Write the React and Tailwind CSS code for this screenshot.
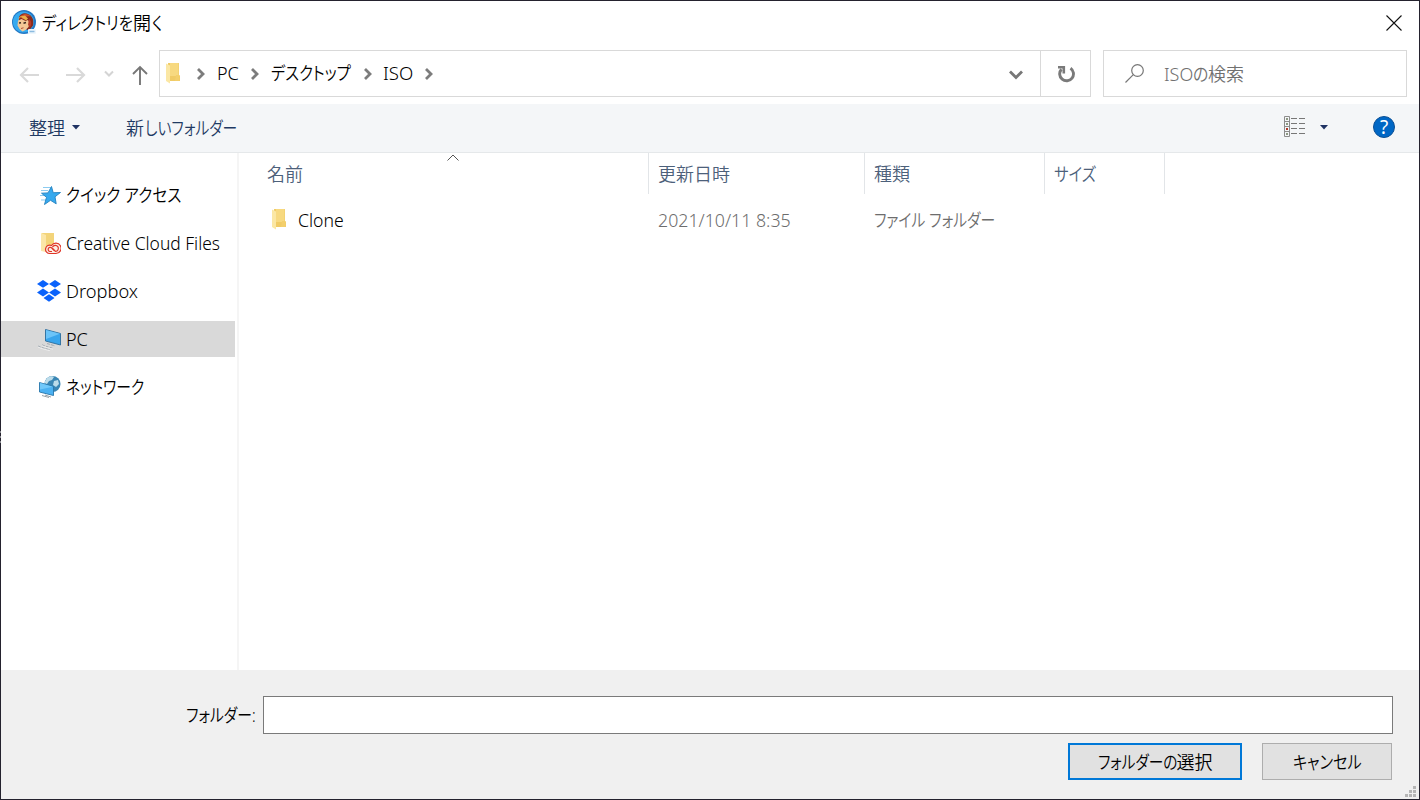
import { useLayoutEffect, useRef, useState } from 'react';

/**
 * One run of text, squeezed horizontally so that it takes exactly `w` pixels
 */
function Fit({ w, children, className = '' }) {
  const ref = useRef(null);
  const [scale, setScale] = useState(1);

  useLayoutEffect(() => {
    setScale(w / ref.current.offsetWidth);
  }, [w, children]);

  return (
    <span className={`inline-block shrink-0 whitespace-pre ${className}`} style={{ width: w }}>
      <span
        ref={ref}
        className="inline-block origin-left [font-feature-settings:'palt']"
        style={{ transform: `scaleX(${scale})` }}
      >
        {children}
      </span>
    </span>
  );
}

function AppLogo() {
  return (
    <svg className="w-6 h-6 shrink-0 -mt-[2px]" viewBox="0 0 24 24">
      <circle cx="12" cy="12" r="12" fill="#2478c4" />
      <circle cx="11.500" cy="12" r="10.600" fill="#36aaf0" />
      <path d="M7 7C9 3 13 2.500 17 4.500c4 2 5 6.500 4 11l-3 4-3 .5-4-6-4-3z" fill="#8a2a1c" />
      <path d="M8 6.500c3-3.500 8-3.500 11 0-4-1-6 0-8 3z" fill="#c9502c" />
      <path d="M6 10.500l3.500-1.500 4 2 2.500-1 1.500 3-1 4-3 3-3 1.500-3-2.500-2-3.500z" fill="#f4c795" />
      <path d="M5.500 10l3.500-3 5 3.500 2-2-3-3-5 1z" fill="#eab04a" />
      <path d="M7 13l2-.3M11.500 13.200l2.500-.7" stroke="#3d2a20" strokeWidth="1.500" />
      <path d="M9 18.500l2.500-.7" stroke="#b34d35" />
      <path d="M17 9c2.500 2 3 5 1 8l-2-2z" fill="#b73a27" />
      <rect x="16" y="19" width="8" height="5" rx="1" fill="#edf6fc" />
      <path d="M17.500 21.500h5" stroke="#8bbbe0" strokeWidth="1.500" />
    </svg>
  );
}

function FolderIcon() {
  return (
    <svg className="w-4 h-[21px] shrink-0" viewBox="0 0 16 21">
      <path d="M3 0h11v12l1 1v5H3z" fill="#f0cb66" />
      <path d="M5 0h8.500v13H5z" fill="#f7d980" />
      <path d="M11 12h3.500v6H10z" fill="#f3cf6c" />
      <path d="M1 .5l4 2v18L1 18z" fill="#fbe7a4" />
    </svg>
  );
}

function Crumb({ className }) {
  return (
    <svg className={`w-2 h-3 shrink-0 ${className}`} viewBox="0 0 8 12" fill="none" stroke="#7c7c7c" strokeWidth="2.800">
      <path d="M1 1l5 5-5 5" />
    </svg>
  );
}

function Caret() {
  return (
    <svg className="w-2 h-[5px] shrink-0" viewBox="0 0 8 5">
      <path d="M0 0h8L4 4.500z" fill="#1f3263" />
    </svg>
  );
}

function TitleBar() {
  return (
    <div className="h-[43px] flex items-center pl-[11px] pr-[17px]">
      <AppLogo />
      <div className="ml-[6px] flex flex-1">
        <Fit w={91}>ディレクトリを</Fit>
        <span>開</span>
        <Fit w={10} className="ml-px">く</Fit>
      </div>
      <svg className="w-4 h-4" viewBox="0 0 16 16" stroke="#111" strokeWidth="1.100">
        <path d="M.5.5l15 15M15.500.5l-15 15" />
      </svg>
    </div>
  );
}

function NavBar() {
  return (
    <div className="h-[60px] flex pt-[6px] pl-[18px] pr-3">
      <div className="h-[47px] w-[140px] shrink-0 flex items-center">
        <svg className="w-5 h-4 mt-[2px]" viewBox="0 0 20 16" fill="none" stroke="#d9d9d9" strokeWidth="2.200">
          <path d="M20 8H2M9 1L2 8l7 7" />
        </svg>
        <svg className="w-5 h-4 mt-[2px] ml-[27px]" viewBox="0 0 20 16" fill="none" stroke="#d9d9d9" strokeWidth="2.200">
          <path d="M0 8h18M11 1l7 7-7 7" />
        </svg>
        <svg className="w-[10px] h-2 ml-[18px]" viewBox="0 0 10 8" fill="none" stroke="#d4d4d4" strokeWidth="2">
          <path d="M1 1.500l4 4 4-4" />
        </svg>
        <svg className="w-4 h-5 ml-[18px] mt-[3px]" viewBox="0 0 16 20" fill="none" stroke="#777" strokeWidth="1.900">
          <path d="M8 20V2M1 9l7-7 7 7" />
        </svg>
      </div>

      {/* Address */}
      <div className="w-[932px] h-[47px] shrink-0 flex border border-[#d9d9d9]">
        <div className="flex-1 flex items-center pl-[5px]">
          <span className="-mt-px"><FolderIcon /></span>
          <Crumb className="ml-[16px] mt-[1px]" />
          <Fit w={22} className="ml-[12px] -mt-px">PC</Fit>
          <Crumb className="ml-[12px] mt-[1px]" />
          <Fit w={80} className="ml-[12px] -mt-px">デスクトップ</Fit>
          <Crumb className="ml-[13px] mt-[1px]" />
          <Fit w={30} className="ml-[11px] -mt-px">ISO</Fit>
          <Crumb className="ml-[12px] mt-[1px]" />
        </div>
        <svg className="w-[14px] h-[10px] mr-[17px] mt-[19px]" viewBox="0 0 14 10" fill="none" stroke="#777" strokeWidth="2.800">
          <path d="M1 1.500l6 6 6-6" />
        </svg>
        <div className="w-[50px] border-l border-[#d9d9d9] flex items-center justify-center">
          <svg className="w-[18px] h-[18px]" viewBox="0 0 18 18" fill="none" stroke="#7a7a7a" strokeWidth="2.900">
            <path d="M13.500 3.200A6.900 6.900 0 1 1 4.500 4.200" />
            <path d="M1 2.300H6.800V8.500" strokeWidth="2.600" />
          </svg>
        </div>
      </div>

      {/* Search */}
      <div className="ml-3 flex-1 h-[47px] flex items-center border border-[#d9d9d9] pl-[21px] text-[#707070]">
        <svg className="w-[19px] h-[19px] mr-[20px] -mt-px" viewBox="0 0 19 19" fill="none" stroke="#777" strokeWidth="1.200">
          <circle cx="12.500" cy="6.500" r="5.800" />
          <path d="M8.300 10.700L.5 18.500" />
        </svg>
        <Fit w={29}>ISO</Fit>
        <Fit w={15}>の</Fit>
        <span>検索</span>
      </div>
    </div>
  );
}

function Toolbar() {
  return (
    <div className="h-[49px] flex items-center bg-[#f4f6f8] border-b border-[#e5e8ea] pl-[28px] pr-6 text-[#1f3a63]">
      <span>整理</span>
      <span className="ml-[7px] -mt-[1px]"><Caret /></span>
      <span className="ml-[46px]">新</span>
      <Fit w={92} className="ml-px">しいフォルダー</Fit>
      <svg className="w-[22px] h-[21px] ml-auto -mt-[3px]" viewBox="0 0 22 21" fill="none">
        <path d="M.5.5h5v20h-5zM.5 5.500h5M.5 10.500h5M.5 15.500h5" stroke="#8c8c8c" />
        <path d="M2 3h2M2 8h2M2 18h2" stroke="#6b7a5c" strokeWidth="1.500" />
        <path d="M2 13h2" stroke="#b3392b" strokeWidth="2" />
        <path d="M7 2.500h6M15 2.500h6M7 7.500h6M15 7.500h6M7 12.500h6M15 12.500h6M7 17.500h6M15 17.500h6" stroke="#777" />
      </svg>
      <span className="ml-[14px] -mt-[1px]"><Caret /></span>
      <div className="w-[22px] h-[22px] ml-[45px] -mt-[2px] rounded-full bg-[#0067c5] border border-[#0b4f94] text-white text-[19px] font-normal leading-5 text-center">
        ?
      </div>
    </div>
  );
}

function StarIcon() {
  return (
    <svg className="w-6 h-6" viewBox="0 0 24 24">
      <path d="M6 4.500h8M4 7.500h7M3 12.500h6M4 17h5" stroke="#8ccbf0" strokeWidth="1.200" />
      <path d="M14.500 3.500l1.700 6.200 7.300-.2-5.500 4.300 1.200 7-5.700-3.500-6 4.200 2-7.200L4.500 10.200l6.500-.3z" fill="#36a9ee" stroke="#2381c0" strokeWidth=".9" />
    </svg>
  );
}

function CreativeCloudIcon() {
  return (
    <svg className="w-6 h-6" viewBox="0 0 24 24">
      <path d="M5 2h12v16H5z" fill="#f3d47a" />
      <path d="M4 2l5 2v17l-5-1z" fill="#fbe6a8" />
      <g fill="none" stroke="#e03528" strokeWidth="1.200">
        <path d="M13 22.500a4.200 4.200 0 1 1 1.500-8 5.200 5.200 0 1 1 4.500 8z" fill="#fbeee6" />
        <path d="M15 20.500h-2a2.100 2.100 0 1 1 1.600-3.700l3 3" />
        <path d="M15.500 16a3.100 3.100 0 1 1 3 4.500l-3.500-3.500" />
      </g>
    </svg>
  );
}

function DropboxIcon() {
  return (
    <svg className="w-6 h-6" viewBox="0 0 24 24" fill="#0a62fb">
      <path d="M6 1l6 3.900-6 3.900L0 4.900zM18 1l6 3.900-6 3.900-6-3.900zM6 9.600l6 3.900-6 3.900-6-3.900zM18 9.600l6 3.900-6 3.900-6-3.900zM12 15.200l5.500 3.700L12 22.800l-5.500-3.900z" />
    </svg>
  );
}

function ComputerIcon() {
  return (
    <svg className="w-6 h-6" viewBox="0 0 24 24">
      <path d="M8.500 2.500L23.500 6.500V18L8.500 14z" fill="#39a5ec" stroke="#2b6c9c" strokeWidth=".9" />
      <path d="M9 3L23 6.800 9 12z" fill="#6cc4f8" />
      <path d="M1 19c4 2 8 2.500 12 3.800M5 17.800c4 1.800 7 2.300 11 3.400M10 16.500l8 2.400" fill="none" stroke="#9aa3aa" strokeWidth=".9" strokeDasharray="3 1" />
      <path d="M1 20c4 2 8 2.500 12 3.800M5 18.700c4 1.800 7 2.300 11 3.400" fill="none" stroke="#f2f2f2" strokeWidth=".8" />
    </svg>
  );
}

function NetworkIcon() {
  return (
    <svg className="w-6 h-6" viewBox="0 0 24 24">
      <circle cx="15.500" cy="9" r="8" fill="#3a86b4" />
      <path d="M10 3c3-2 6-2 7-1l-2 3-3 1-2 3-3-1zM17 6l4-1 1 4-3 3-3-2z" fill="#bcdcea" />
      <path d="M2.500 7.500l14 4V20.500l-14-3.500z" fill="#4bb1f2" stroke="#2776aa" strokeWidth=".9" />
      <path d="M3 8l13 3.800L3 14.500z" fill="#70c8fa" />
      <path d="M5 20.500l7 2M8 20l6 2" stroke="#99a2a8" />
    </svg>
  );
}

const places = [
  { label: 'クイック アクセス', w: 115, Icon: StarIcon },
  { label: 'Creative Cloud Files', w: 154, Icon: CreativeCloudIcon },
  { label: 'Dropbox', w: 72, Icon: DropboxIcon },
  { label: 'PC', w: 22, Icon: ComputerIcon, selected: true },
  { label: 'ネットワーク', w: 78, Icon: NetworkIcon },
];

function Sidebar() {
  return (
    <div className="w-[238px] shrink-0 pt-6 border-r-2 border-[#f5f5f5]">
      <ul className="flex flex-col gap-3">
        {places.map(({ label, w, Icon, selected }) => (
          <li
            key={label}
            className={`h-9 w-[234px] flex items-center pl-9 ${selected ? 'bg-[#d9d9d9]' : ''}`}
          >
            <Icon />
            <Fit w={w} className="ml-[5px]">{label}</Fit>
          </li>
        ))}
      </ul>
    </div>
  );
}

function FileList() {
  return (
    <div className="flex-1">
      <div className="relative h-[41px] flex text-[#4c607a] leading-[43px]">
        <div className="w-[410px] pl-[28px] border-r border-[#e2e5e8]">名前</div>
        <div className="w-[216px] pl-[9px] border-r border-[#e2e5e8]">更新日時</div>
        <div className="w-[180px] pl-[9px] border-r border-[#e2e5e8]">種類</div>
        <div className="w-[120px] pl-[9px] border-r border-[#e2e5e8]">
          <Fit w={42}>サイズ</Fit>
        </div>
        {/* Sort direction */}
        <svg className="absolute left-[208px] top-px w-3 h-[7px]" viewBox="0 0 12 7" fill="none" stroke="#555">
          <path d="M.5 6.500L6 1l5.500 5.500" />
        </svg>
      </div>
      <div className="h-9 mt-2 flex items-center text-[#6d6d6d]">
        <div className="w-[419px] flex items-center pl-[32px] text-black">
          <span className="-mt-px"><FolderIcon /></span>
          <Fit w={46} className="ml-[11px]">Clone</Fit>
        </div>
        <div className="w-[216px]">
          <Fit w={133}>2021/10/11 8:35</Fit>
        </div>
        <Fit w={121}>ファイル フォルダー</Fit>
      </div>
    </div>
  );
}

function Footer() {
  return (
    <div className="relative h-[129px] bg-[#f0f0f0] pt-[26px] pr-[26px]">
      <div className="flex items-center">
        <div className="w-[262px] pl-[185px]">
          <Fit w={70}>フォルダー:</Fit>
        </div>
        <input className="flex-1 h-[38px] bg-white border border-[#7a7a7a] outline-none px-2" />
      </div>
      <div className="flex justify-end gap-5 mt-[9px] pr-px">
        <button className="w-[174px] h-[37px] flex items-center justify-center bg-[#e1e1e1] border-2 border-[#0078d7]">
          <Fit w={79}>フォルダーの</Fit>
          <span>選択</span>
        </button>
        <button className="w-[130px] h-[37px] flex items-center justify-center bg-[#e1e1e1] border border-[#adadad]">
          <Fit w={69}>キャンセル</Fit>
        </button>
      </div>
      {/* Resize grip */}
      <svg className="absolute right-[3px] bottom-[2px] w-[11px] h-[11px]" viewBox="0 0 11 11" fill="#b5b5b5">
        <path d="M8 0h3v3H8zM4 4h3v3H4zM8 4h3v3H8zM0 8h3v3H0zM4 8h3v3H4zM8 8h3v3H8z" />
      </svg>
    </div>
  );
}

export default function App() {
  return (
    <div className="relative w-[1420px] h-[800px] flex flex-col bg-white border border-[#24222e] text-black text-[18px] font-[350] leading-6 font-['Noto_Sans','Noto_Sans_CJK_JP',sans-serif]">
      <TitleBar />
      <NavBar />
      <Toolbar />
      <div className="flex-1 flex">
        <Sidebar />
        <FileList />
      </div>
      <Footer />
      {/* Splitter dots on the window edge */}
      <div className="absolute -left-px top-[430px] w-px h-3 flex flex-col justify-between">
        <span className="h-[2px] bg-[#8a8a90]" />
        <span className="h-[2px] bg-[#8a8a90]" />
        <span className="h-[2px] bg-[#8a8a90]" />
      </div>
    </div>
  );
}
